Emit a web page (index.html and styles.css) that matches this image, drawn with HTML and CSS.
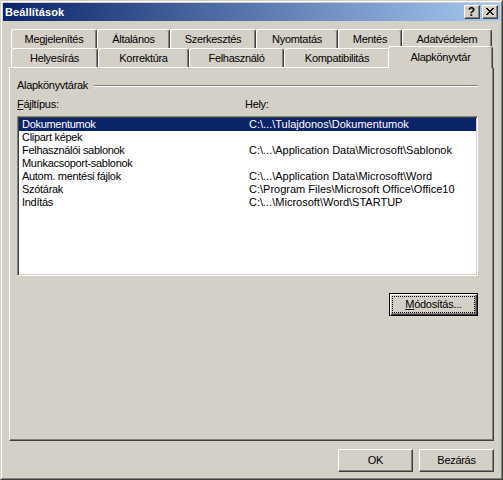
FILE: index.html
```html
<!DOCTYPE html>
<html lang="hu">
<head>
<meta charset="utf-8">
<title>Beállítások</title>
<link rel="stylesheet" href="styles.css">
</head>
<body>
<div class="window">
  <div class="frame">
    <div class="titlebar">
      <span class="title">Beállítások</span>
      <div class="caption-btns">
        <div class="cbtn help">?</div>
        <div class="cbtn close">
          <svg width="8" height="7" viewBox="0 0 8 7"><path d="M0 0h2v1h-2zM1 1h2v1h-2zM2 2h4v1h-4zM3 3h2v1h-2zM2 4h4v1h-4zM1 5h2v1h-2zM0 6h2v1h-2zM6 0h2v1h-2zM5 1h2v1h-2zM5 5h2v1h-2zM6 6h2v1h-2z" fill="#000"/></svg>
        </div>
      </div>
    </div>
    <div class="content">
      <div class="tabs">
        <div class="tabrow">
          <div class="tab w-megj">Megjelenítés</div>
          <div class="tab w-alt">Általános</div>
          <div class="tab w-szerk">Szerkesztés</div>
          <div class="tab w-nyomt">Nyomtatás</div>
          <div class="tab w-ment">Mentés</div>
          <div class="tab w-adat">Adatvédelem</div>
        </div>
        <div class="tabrow">
          <div class="tab w-hely">Helyesírás</div>
          <div class="tab w-korr">Korrektúra</div>
          <div class="tab w-felh">Felhasználó</div>
          <div class="tab w-komp">Kompatibilitás</div>
          <div class="tab sel w-alap">Alapkönyvtár</div>
        </div>
      </div>
      <div class="panel">
        <div class="group-head"><span>Alapkönyvtárak</span><span class="etch"></span></div>
        <div class="labels"><span class="lcol"><u>F</u>ájltípus:</span><span>Hely:</span></div>
        <div class="listbox">
          <div class="row selected"><span>Dokumentumok</span><span class="path">C:\...\Tulajdonos\Dokumentumok</span></div>
          <div class="row"><span>Clipart képek</span><span class="path"></span></div>
          <div class="row"><span>Felhasználói sablonok</span><span class="path">C:\...\Application Data\Microsoft\Sablonok</span></div>
          <div class="row"><span>Munkacsoport-sablonok</span><span class="path"></span></div>
          <div class="row"><span>Autom. mentési fájlok</span><span class="path">C:\...\Application Data\Microsoft\Word</span></div>
          <div class="row"><span>Szótárak</span><span class="path">C:\Program Files\Microsoft Office\Office10</span></div>
          <div class="row"><span>Indítás</span><span class="path">C:\...\Microsoft\Word\STARTUP</span></div>
        </div>
        <div class="modrow">
          <div class="btn default"><span class="focus"><u>M</u>ódosítás...</span></div>
        </div>
      </div>
      <div class="footer">
        <div class="btn">OK</div>
        <div class="btn">Bezárás</div>
      </div>
    </div>
  </div>
</div>
</body>
</html>
```

FILE: styles.css
```css
* { box-sizing: border-box; }
html, body { margin: 0; padding: 0; }
body {
  width: 503px;
  height: 480px;
  overflow: hidden;
  background: #d4d0c8;
  font-family: "Liberation Sans", Arial, sans-serif;
  font-size: 11px;
  letter-spacing: -0.3px;
  color: #000;
}
u { text-decoration: underline; text-underline-offset: 1px; }

.window {
  width: 503px;
  height: 480px;
  border: 1px solid;
  border-color: #d4d0c8 #404040 #404040 #d4d0c8;
  background: #d4d0c8;
}
.frame {
  height: 100%;
  border: 1px solid;
  border-color: #fff #808080 #808080 #fff;
  padding: 1px;
  display: flex;
  flex-direction: column;
}
.titlebar {
  height: 18px;
  flex: none;
  background: linear-gradient(to right, #0a246a, #a6caf0);
  display: flex;
  align-items: center;
  justify-content: space-between;
  padding: 0 2px;
}
.title {
  color: #fff;
  font-weight: bold;
  letter-spacing: 0.1px;
  line-height: 13px;
}
.caption-btns { display: flex; gap: 2px; }
.cbtn {
  width: 16px;
  height: 14px;
  background: #d4d0c8;
  border: 1px solid;
  border-color: #fff #404040 #404040 #fff;
  box-shadow: inset -1px -1px #808080;
  display: flex;
  align-items: center;
  justify-content: center;
}
.help { font-weight: bold; font-size: 12px; line-height: 12px; letter-spacing: 0; padding-right: 1px; }
.close svg { display: block; margin-top: -1px; }

.content {
  flex: 1;
  padding: 8px 6px 0 6px;
  display: flex;
  flex-direction: column;
}
.tabs { padding-left: 2px; }
.tabrow { display: flex; height: 19px; }
.tab {
  height: 19px;
  border: 1px solid #fff;
  border-bottom: none;
  border-right-color: #404040;
  border-radius: 3px 3px 0 0;
  box-shadow: inset -1px 0 #808080;
  background: #d4d0c8;
  text-align: center;
  padding-top: 3px;
  line-height: 13px;
  white-space: nowrap;
}
.tab.sel {
  height: 22px;
  margin: -2px -2px 0 -2px;
  padding-top: 4px;
  position: relative;
  z-index: 1;
}
.w-megj { width: 86px; }
.w-alt { width: 73px; }
.w-szerk { width: 86px; }
.w-nyomt { width: 82px; }
.w-ment { width: 64px; }
.w-adat { width: 90px; }
.w-hely { width: 87px; }
.w-korr { width: 91px; }
.w-felh { width: 95px; }
.w-komp { width: 106px; }
.w-alap { width: 105px; }

.panel {
  height: 374px;
  flex: none;
  border: 1px solid;
  border-color: #fff #404040 #404040 #fff;
  box-shadow: inset -1px -1px #808080;
  padding: 11px 15px 0 7px;
  display: flex;
  flex-direction: column;
}
.group-head {
  display: flex;
  align-items: center;
  line-height: 13px;
  height: 13px;
}
.etch {
  flex: 1;
  height: 2px;
  margin-left: 6px;
  border-top: 1px solid #808080;
  border-bottom: 1px solid #fff;
}
.labels {
  margin-top: 6px;
  display: flex;
  line-height: 13px;
}
.lcol { width: 228px; }
.listbox {
  margin-top: 5px;
  height: 160px;
  flex: none;
  background: #fff;
  border: 1px solid;
  border-color: #808080 #fff #fff #808080;
  box-shadow: inset 1px 1px #404040, inset -1px -1px #d4d0c8;
  padding: 1px;
}
.row {
  display: grid;
  grid-template-columns: 227px 1fr;
  height: 13px;
  line-height: 13px;
  padding-left: 3px;
  white-space: nowrap;
}
.path { letter-spacing: 0; }
.row.selected { background: #0a246a; color: #fff; }

.modrow {
  margin-top: 17px;
  display: flex;
  justify-content: flex-end;
}
.btn {
  width: 75px;
  height: 23px;
  background: #d4d0c8;
  border: 1px solid;
  border-color: #fff #404040 #404040 #fff;
  box-shadow: inset -1px -1px #808080;
  display: flex;
  align-items: center;
  justify-content: center;
  line-height: 13px;
}
.btn.default {
  width: 89px;
  border-color: #000;
  box-shadow: inset 1px 1px #fff, inset -1px -1px #404040, inset -2px -2px #808080;
  padding: 3px;
}
.focus {
  flex: 1;
  align-self: stretch;
  display: flex;
  align-items: center;
  justify-content: center;
  outline: 1px dotted #000;
}
.footer {
  margin-top: 8px;
  display: flex;
  justify-content: flex-end;
  gap: 6px;
}
```
